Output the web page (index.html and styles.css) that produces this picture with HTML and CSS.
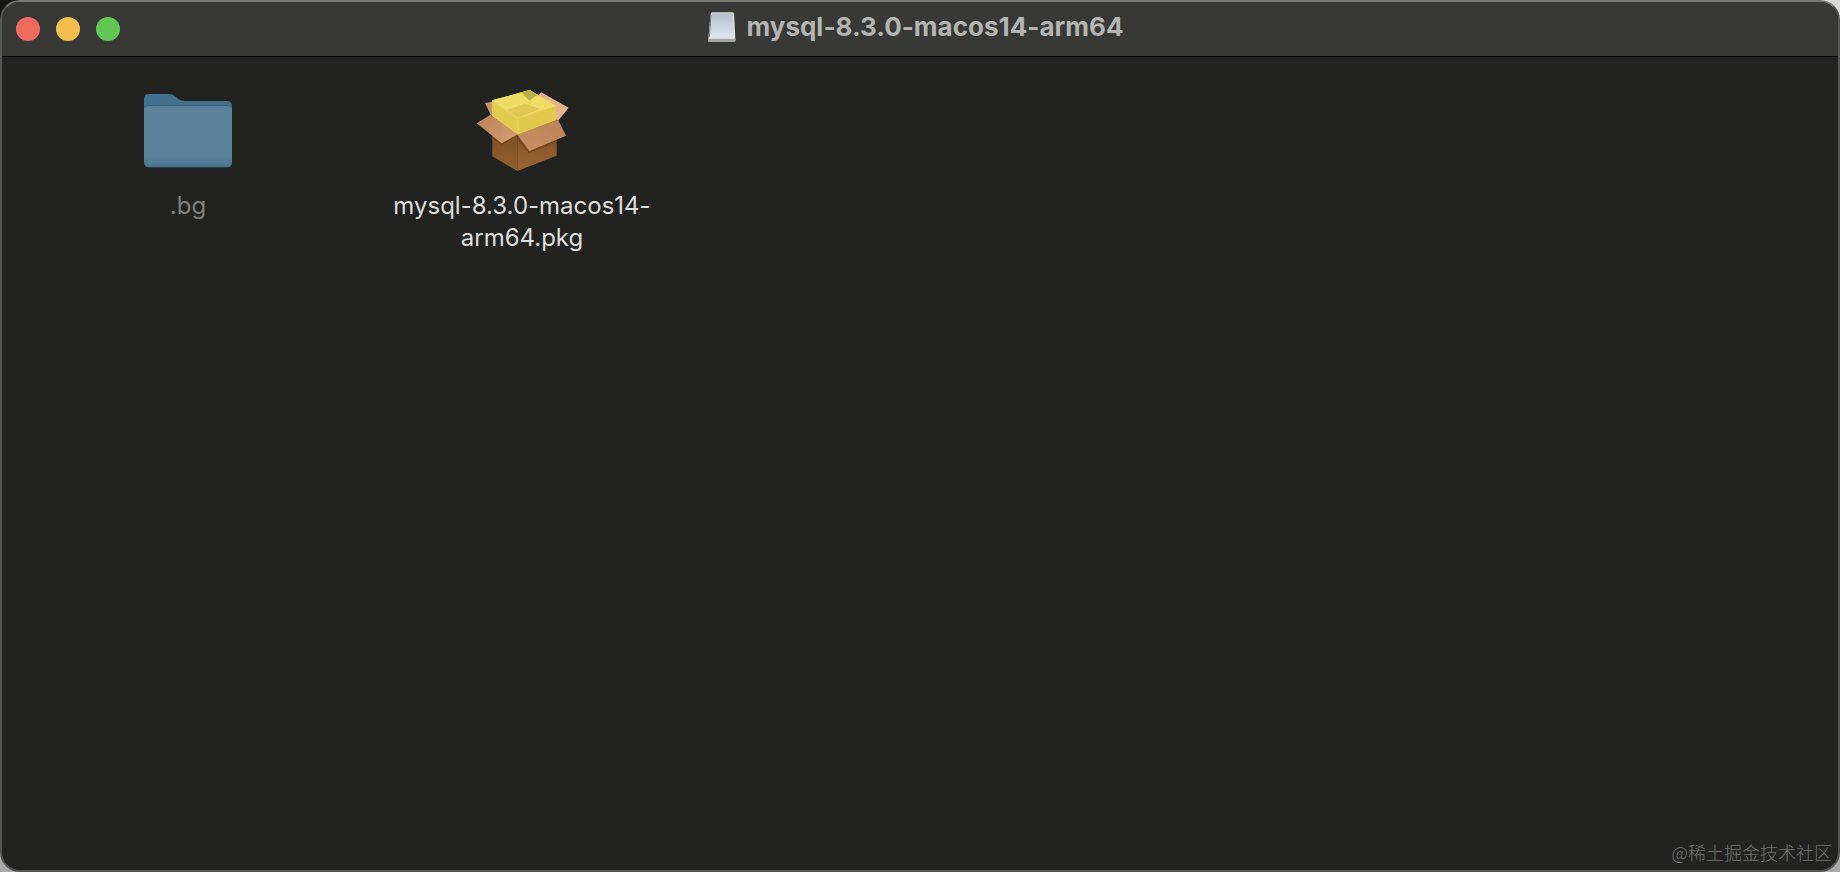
FILE: index.html
```
<!DOCTYPE html>
<html lang="zh-CN">
<head>
    <meta charset="UTF-8">
    <meta name="viewport" content="width=device-width, initial-scale=1.0">
    <title>mysql-8.3.0-macos14-arm64</title>
    <link rel="stylesheet" href="styles.css">
</head>
<body>
    <div class="window">
        <header class="titlebar">
            <div class="controls">
                <button class="control close" type="button" aria-label="Close"></button>
                <button class="control minimize" type="button" aria-label="Minimize"></button>
                <button class="control zoom" type="button" aria-label="Zoom"></button>
            </div>
            <h1 class="title">
                <svg class="disk" viewBox="0 0 84 93" aria-hidden="true">
                    <defs>
                        <linearGradient id="diskTop" x1="0" y1="0" x2="0" y2="1">
                            <stop offset="0" stop-color="#b3bfcb"/>
                            <stop offset="1" stop-color="#dde6f0"/>
                        </linearGradient>
                    </defs>
                    <path d="M8 6Q9 1 13 1H73Q77 1 78 5L82 79V87Q82 90 79 90H4Q1 90 1 87V79Z" fill="#e2e4e3"/>
                    <path d="M12 4H74L78 76H7Z" fill="url(#diskTop)"/>
                    <path d="M1 80H82V87Q82 90 79 90H4Q1 90 1 87Z" fill="#a5a69f"/>
                    <path d="M9 8L4 76" stroke="#6c7072" stroke-width="3"/>
                </svg>
                <span>mysql-8.3.0-macos14-arm64</span>
            </h1>
        </header>
        <main class="files">
            <figure class="file hidden-file">
                <svg class="icon" viewBox="-6 0 360 300" aria-hidden="true">
                    <defs>
                        <linearGradient id="folderFront" x1="0" y1="0" x2="0" y2="1">
                            <stop offset="0" stop-color="#5a839b"/>
                            <stop offset="0.8" stop-color="#58819a"/>
                            <stop offset="1" stop-color="#4d7690"/>
                        </linearGradient>
                    </defs>
                    <path d="M42 58Q42 42 58 42H116Q127 42 135 49L145 57Q153 63 164 63H290Q306 63 306 79V120H42Z" fill="#43708c"/>
                    <path d="M42 88Q42 77 54 77H294Q306 77 306 88V246Q306 262 290 262H58Q42 262 42 246Z" fill="url(#folderFront)"/>
                    <path d="M46 80Q49 77 55 77H293Q299 77 302 80" fill="none" stroke="#365f7a" stroke-width="3"/>
                    <path d="M44 247Q46 260 58 260H290Q302 260 304 247" fill="none" stroke="#426b84" stroke-width="3"/>
                </svg>
                <figcaption>.bg</figcaption>
            </figure>
            <figure class="file">
                <svg class="icon" viewBox="6 0 360 300" aria-hidden="true">
                    <defs>
                        <linearGradient id="boxLeft" x1="0" y1="0" x2="0" y2="1">
                            <stop offset="0" stop-color="#75461f"/>
                            <stop offset="1" stop-color="#93602f"/>
                        </linearGradient>
                        <linearGradient id="boxRight" x1="0" y1="0" x2="0" y2="1">
                            <stop offset="0" stop-color="#7e4c22"/>
                            <stop offset="1" stop-color="#986436"/>
                        </linearGradient>
                        <linearGradient id="flap" x1="0" y1="0" x2="1" y2="1">
                            <stop offset="0" stop-color="#b98055"/>
                            <stop offset="1" stop-color="#d4a078"/>
                        </linearGradient>
                        <linearGradient id="flapRight" x1="0" y1="1" x2="1" y2="0">
                            <stop offset="0" stop-color="#c98f65"/>
                            <stop offset="1" stop-color="#b98456"/>
                        </linearGradient>
                    </defs>
                    <!-- back flaps -->
                    <path d="M75 69L98 65V108L92 104Z" fill="#cb8f6b"/>
                    <path d="M228 57L243 37L326 83L294 122L284 118Z" fill="#e5b48e"/>
                    <!-- box body -->
                    <path d="M96 108L172 164V273L97 229Z" fill="url(#boxLeft)"/>
                    <path d="M172 164L290 118V227L172 273Z" fill="url(#boxRight)"/>
                    <!-- contents -->
                    <path d="M96 61L209 30L287 77V121L172 164L96 108Z" fill="#e9d45a"/>
                    <path d="M96 61L209 30L287 77L174 115Z" fill="#efdc65"/>
                    <path d="M184 37L209 30L232 44L208 62Z" fill="#b9b148"/>
                    <path d="M132 93L194 71L240 87L174 115Z" fill="#e1c855"/>
                    <path d="M96 61L174 115V164L96 108Z" fill="#e2cc50"/>
                    <path d="M174 115L287 77V121L174 164Z" fill="#e0c94d"/>
                    <path d="M96 61L174 115L287 77M174 115V162M134 88L208 63L250 88" fill="none" stroke="#f3e27a" stroke-width="2" opacity="0.6"/>
                    <!-- front flaps -->
                    <path d="M98 177L125 194L172 168V178L207 219L290 187V167L172 164Z" fill="#5d3517" opacity="0.5"/>
                    <path d="M92 104L172 164L125 190L50 130Z" fill="url(#flap)"/>
                    <path d="M172 164L294 119L318 167L208 213Z" fill="url(#flapRight)"/>
                </svg>
                <figcaption>mysql-8.3.0-macos14-arm64.pkg</figcaption>
            </figure>
        </main>
        <footer class="watermark">@稀土掘金技术社区</footer>
    </div>
</body>
</html>
```
FILE: styles.css
```
* {
    box-sizing: border-box;
}
body {
    margin: 0;
    background: linear-gradient(to right, #161616 30%, #d8d8d8 70%) top / 100% 50% no-repeat #a9a9a9;
    font-family: Inter, "Noto Sans CJK SC", sans-serif;
}
.window {
    display: flex;
    flex-direction: column;
    min-height: 100vh;
    overflow: hidden;
    border: 2px solid #555554;
    border-top-color: #777776;
    border-radius: 20px;
    background-color: #222220;
}
.titlebar {
    display: grid;
    grid-template-columns: 1fr auto 1fr;
    align-items: center;
    height: 55px;
    padding: 0 14px;
    border-bottom: 1px solid #000;
    background-color: #383836;
}
.controls {
    display: flex;
    gap: 16px;
}
.control {
    width: 24px;
    height: 24px;
    padding: 0;
    border: none;
    border-radius: 50%;
}
.close {
    background-color: #ed6a5f;
}
.minimize {
    background-color: #f5bf50;
}
.zoom {
    background-color: #62c655;
}
.title {
    display: flex;
    align-items: center;
    gap: 10px;
    margin: 0;
    padding: 0 8px 4px 0;
    color: #b4b4b3;
    font-size: 26px;
    font-weight: 700;
    line-height: 32px;
}
.disk {
    width: 28px;
    height: 31px;
}
.files {
    display: flex;
    flex: 1;
    flex-wrap: wrap;
    align-content: flex-start;
    padding: 23px 19px;
}
.file {
    display: flex;
    flex-direction: column;
    align-items: center;
    gap: 10px;
    width: 334px;
    margin: 0;
    color: #dfdfde;
}
.hidden-file {
    color: #80807f;
}
.icon {
    width: 120px;
    height: 100px;
}
.file figcaption {
    width: 270px;
    font-size: 24px;
    font-weight: 400;
    line-height: 32px;
    text-align: center;
}
.watermark {
    padding: 0 6px 6px;
    color: #747473;
    font-family: "Noto Sans CJK SC", sans-serif;
    font-size: 18px;
    font-weight: 300;
    line-height: 24px;
    text-align: right;
}
```
